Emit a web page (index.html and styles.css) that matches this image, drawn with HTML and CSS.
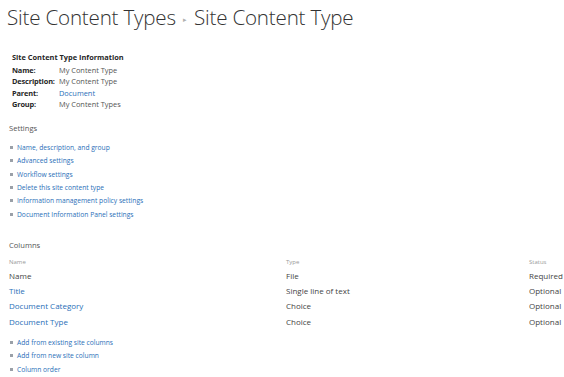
FILE: index.html
```html
<!DOCTYPE html>
<html>
<head>
<meta charset="utf-8">
<link rel="stylesheet" href="styles.css">
</head>
<body>
<div class="page">
  <h1 class="title">Site Content Types <span class="sep">&#9656;</span> Site Content Type</h1>

  <div class="info">
    <div class="info-head">Site Content Type Information</div>
    <div class="info-grid">
      <span class="lbl">Name:</span><span class="val">My Content Type</span>
      <span class="lbl">Description:</span><span class="val">My Content Type</span>
      <span class="lbl">Parent:</span><span class="val link">Document</span>
      <span class="lbl">Group:</span><span class="val">My Content Types</span>
    </div>
  </div>

  <div class="section-head settings-head">Settings</div>
  <ul class="links">
    <li><span class="bul"></span><a>Name, description, and group</a></li>
    <li><span class="bul"></span><a>Advanced settings</a></li>
    <li><span class="bul"></span><a>Workflow settings</a></li>
    <li><span class="bul"></span><a>Delete this site content type</a></li>
    <li><span class="bul"></span><a>Information management policy settings</a></li>
    <li><span class="bul"></span><a>Document Information Panel settings</a></li>
  </ul>

  <div class="section-head columns-head">Columns</div>
  <div class="cols">
    <div class="row hdr"><span>Name</span><span>Type</span><span>Status</span></div>
    <div class="row"><span>Name</span><span>File</span><span>Required</span></div>
    <div class="row"><span class="link">Title</span><span>Single line of text</span><span>Optional</span></div>
    <div class="row"><span class="link">Document Category</span><span>Choice</span><span>Optional</span></div>
    <div class="row"><span class="link">Document Type</span><span>Choice</span><span>Optional</span></div>
  </div>

  <ul class="links bottom">
    <li><span class="bul"></span><a>Add from existing site columns</a></li>
    <li><span class="bul"></span><a>Add from new site column</a></li>
    <li><span class="bul"></span><a>Column order</a></li>
  </ul>
</div>
</body>
</html>
```
FILE: styles.css
```css
html, body {
  margin: 0;
  padding: 0;
  background: #ffffff;
}
body {
  font-family: "Open Sans", "Noto Sans", "Liberation Sans", sans-serif;
  color: #444444;
}
.page {
  padding: 0 6px 0 9px;
}
.title {
  margin: 0 0 0 -2px;
  padding-top: 3px;
  font-weight: 300;
  font-size: 20.6px;
  line-height: 29px;
  color: #333333;
  letter-spacing: -0.2px;
  white-space: nowrap;
}
.sep {
  font-size: 7px;
  color: #b0b0b0;
  vertical-align: 3px;
  margin: 0 2px;
}
.info {
  margin-top: 17px;
  padding-left: 3px;
  font-size: 7.4px;
}
.info-head {
  font-weight: 700;
  color: #262626;
  line-height: 12px;
}
.info-grid {
  margin-top: 2px;
  display: grid;
  grid-template-columns: 47px auto;
  line-height: 11.4px;
}
.lbl {
  font-weight: 700;
  color: #262626;
  letter-spacing: -0.15px;
}
.val {
  color: #555555;
}
.link {
  color: #2a6fb8;
}
.section-head {
  font-size: 7.6px;
  color: #555555;
  line-height: 12px;
}
.settings-head {
  margin-top: 11px;
}
.links {
  list-style: none;
  margin: 7px 0 0 0;
  padding: 0;
  font-size: 6.7px;
}
.links li {
  display: flex;
  align-items: center;
  height: 13.4px;
}
.links a {
  color: #2a6fb8;
}
.bul {
  width: 3px;
  height: 3px;
  background: #9aa0a8;
  margin: 0 4px 0 1px;
  flex: none;
}
.columns-head {
  margin-top: 18px;
}
.cols {
  margin-top: 5px;
}
.row {
  display: grid;
  grid-template-columns: 277px 243px auto;
  font-size: 8px;
  line-height: 15.2px;
  color: #444444;
}
.row.hdr {
  font-size: 6px;
  color: #999999;
  line-height: 12px;
}
.links.bottom {
  margin-top: 7px;
}
```
